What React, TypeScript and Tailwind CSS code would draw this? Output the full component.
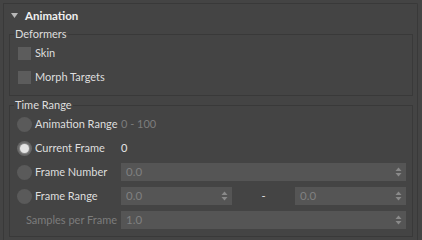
import React from 'react';

function Spinner() {
    return (
        <svg width="7" height="10" viewBox="0 0 7 10" className="shrink-0">
            <path d="M3.5 0.5 L6.5 4 L0.5 4 Z" fill="#8a8a8a" />
            <path d="M0.5 6 L6.5 6 L3.5 9.5 Z" fill="#8a8a8a" />
        </svg>
    );
}

function NumInput({ value, className = '' }: { value: string; className?: string }) {
    return (
        <div className={`h-[18px] bg-[#555555] flex items-center justify-between pl-[5px] pr-[4px] ${className}`}>
            <span className="text-[#808080] text-[11.5px]">{value}</span>
            <Spinner />
        </div>
    );
}

function Radio({ checked = false }: { checked?: boolean }) {
    return (
        <div className={`w-[15px] h-[15px] rounded-full shrink-0 flex items-center justify-center ${checked ? 'bg-[#666666]' : 'bg-[#5a5a5a]'}`}>
            {checked && <div className="w-[9px] h-[9px] rounded-full bg-[#e4e4e4] shadow-[0_0_1px_1px_rgba(200,200,200,0.4)]" />}
        </div>
    );
}

function Checkbox() {
    return <div className="w-[13px] h-[13px] bg-[#5c5c5c] shrink-0" />;
}

export default function App() {
    return (
        <div
            className="w-[422px] h-[240px] bg-[#444444] pt-[3px] pl-[3px] overflow-hidden text-[11px] text-[#dedede] whitespace-nowrap"
            style={{ fontFamily: 'Lato, "Liberation Sans", sans-serif' }}
        >
            <div className="w-[415px] h-[240px] border-l border-t border-r border-[#393939] rounded-tr-[2px]">
                {/* Rollout header */}
                <div className="h-[23px] flex items-center pl-[7px] gap-[7px]">
                    <svg width="7" height="5" viewBox="0 0 7 5">
                        <path d="M0 0 L7 0 L3.5 5 Z" fill="#b8b8b8" />
                    </svg>
                    <span className="font-bold text-[#f0f0f0] text-[11.5px]">Animation</span>
                </div>

                {/* Deformers */}
                <fieldset className="ml-[5px] w-[404px] border border-[#393939] pb-[6px]">
                    <legend className="ml-[4px] px-[1px] leading-[14px]">Deformers</legend>
                    <div className="h-[24px] flex items-center pl-[8px] gap-[4px]">
                        <Checkbox />
                        <span>Skin</span>
                    </div>
                    <div className="h-[24px] flex items-center pl-[8px] gap-[4px]">
                        <Checkbox />
                        <span>Morph Targets</span>
                    </div>
                </fieldset>

                {/* Time Range */}
                <fieldset className="mt-[2px] ml-[5px] w-[404px] border border-[#393939] pb-[4px]">
                    <legend className="ml-[4px] px-[1px] leading-[14px]">Time Range</legend>

                    <div className="h-[24px] flex items-center">
                        <div className="w-[111px] flex items-center pl-[7px] gap-[3px]">
                            <Radio />
                            <span>Animation Range</span>
                        </div>
                        <span className="text-[#7c7c7c]">0 - 100</span>
                    </div>

                    <div className="h-[24px] flex items-center">
                        <div className="w-[111px] flex items-center pl-[7px] gap-[3px]">
                            <Radio checked />
                            <span>Current Frame</span>
                        </div>
                        <span className="text-[#e6e6e6]">0</span>
                    </div>

                    <div className="h-[24px] flex items-center pr-[6px]">
                        <div className="w-[111px] flex items-center pl-[7px] gap-[3px]">
                            <Radio />
                            <span>Frame Number</span>
                        </div>
                        <NumInput value="0.0" className="flex-1" />
                    </div>

                    <div className="h-[24px] flex items-center pr-[6px]">
                        <div className="w-[111px] flex items-center pl-[7px] gap-[3px]">
                            <Radio />
                            <span>Frame Range</span>
                        </div>
                        <NumInput value="0.0" className="w-[111px]" />
                        <span className="flex-1 text-center text-[#e6e6e6]">-</span>
                        <NumInput value="0.0" className="w-[111px]" />
                    </div>

                    <div className="h-[24px] flex items-center pr-[6px]">
                        <div className="w-[111px] flex justify-end pr-[4px]">
                            <span className="text-[#7c7c7c]">Samples per Frame</span>
                        </div>
                        <NumInput value="1.0" className="flex-1" />
                    </div>
                </fieldset>
            </div>
        </div>
    );
}
